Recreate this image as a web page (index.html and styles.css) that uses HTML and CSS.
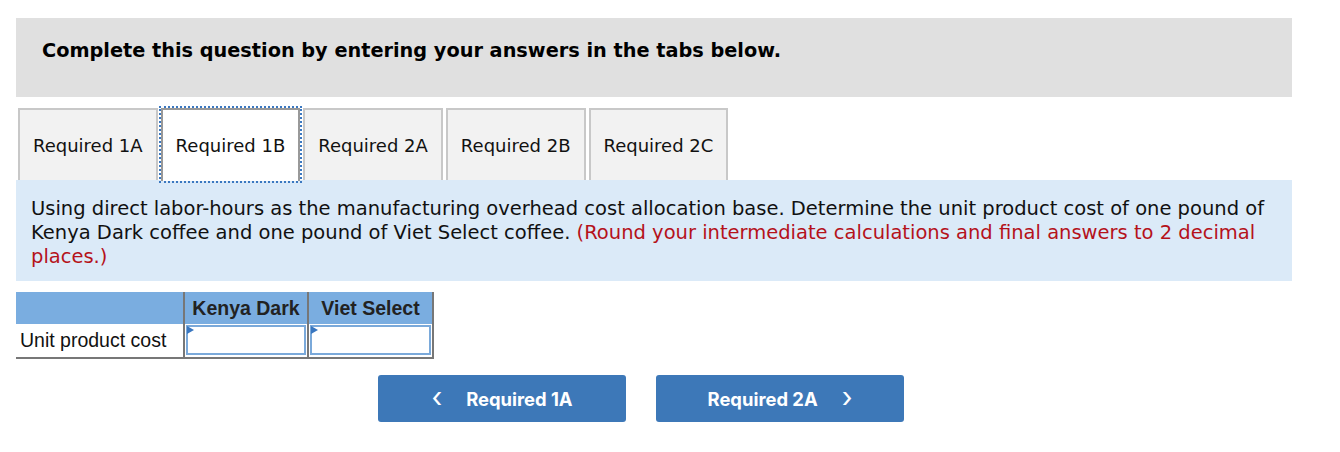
FILE: index.html
```html
<!DOCTYPE html>
<html>
<head>
<meta charset="utf-8">
<link rel="stylesheet" href="styles.css">
</head>
<body>
<div class="wrap">
  <div class="banner">Complete this question by entering your answers in the tabs below.</div>
  <div class="tabs">
    <div class="tab">Required 1A</div>
    <div class="tab active">Required 1B</div>
    <div class="tab">Required 2A</div>
    <div class="tab">Required 2B</div>
    <div class="tab">Required 2C</div>
  </div>
  <div class="panel">
    Using direct labor-hours as the manufacturing overhead cost allocation base. Determine the unit product cost of one pound of Kenya Dark coffee and one pound of Viet Select coffee. <span class="red">(Round your intermediate calculations and final answers to 2 decimal places.)</span>
  </div>
  <table class="grid">
    <tr class="head">
      <th class="c1"></th>
      <th class="c2">Kenya Dark</th>
      <th class="c3">Viet Select</th>
    </tr>
    <tr class="row">
      <td class="label">Unit product cost</td>
      <td class="cell"><div class="input"></div></td>
      <td class="cell"><div class="input"></div></td>
    </tr>
  </table>
  <div class="nav">
    <div class="btn"><span class="chev">&#x2039;</span><span>Required 1A</span></div>
    <div class="btn"><span>Required 2A</span><span class="chev">&#x203A;</span></div>
  </div>
</div>
</body>
</html>
```
FILE: styles.css
```css
html, body { margin: 0; padding: 0; background: #fff; }
body { font-family: "DejaVu Sans", Verdana, sans-serif; color: #000; }
.wrap { padding: 18px 48px 0 16px; }
.banner {
  background: #e0e0e0;
  height: 79px;
  box-sizing: border-box;
  padding: 21px 26px 0;
  font-weight: bold;
  font-size: 19.3px;
  line-height: 24px;
}
.tabs {
  display: flex;
  gap: 3px;
  margin-top: 11px;
  padding-left: 2px;
  height: 72px;
}
.tab {
  background: #f2f2f2;
  border: 2px solid #c8c8c8;
  border-bottom: none;
  box-sizing: border-box;
  height: 72px;
  padding: 25px 13px 0;
  font-size: 18px;
  line-height: 22px;
  color: #111;
}
.tab.active {
  background: #fff;
  border: 2px solid #999;
  border-bottom: none;
  outline: 2px dotted #3b78c0;
  outline-offset: 0;
  position: relative;
  z-index: 2;
  height: 73px;
}
.panel {
  background: #dbeaf8;
  padding: 17px 15px 12px;
  font-size: 19.5px;
  line-height: 24px;
  color: #111;
}
.red { color: #b5121b; }
.grid {
  border-collapse: collapse;
  margin-top: 11px;
  font-family: "Liberation Sans", Arial, sans-serif;
}
.head th {
  background: #7aade0;
  height: 32px;
  padding: 0;
  font-size: 19.5px;
  font-weight: bold;
  color: #222;
  border-left: 2px solid #777;
  border-right: 2px solid #777;
  text-align: center;
}
.head th.c1 { width: 167px; border-left: none; }
.head th.c2 { width: 122px; }
.head th.c3 { width: 123px; }
.row td {
  height: 34px;
  padding: 0;
  border-bottom: 2px solid #777;
  border-left: 2px solid #777;
  border-right: 2px solid #777;
  box-sizing: border-box;
}
.row td.label {
  border-left: none;
  font-size: 19.5px;
  padding-left: 4px;
  color: #111;
}
.row td.cell { padding: 1px; vertical-align: top; }
.input {
  position: relative;
  height: 30px;
  border: 2px solid #7aa9da;
  box-sizing: border-box;
  background: #fff;
}
.input::before {
  content: "";
  position: absolute;
  left: -1px;
  top: -1px;
  border-left: 7px solid #3a77c0;
  border-top: 4px solid transparent;
  border-bottom: 4px solid transparent;
}
.nav {
  display: flex;
  gap: 30px;
  padding-left: 362px;
  margin-top: 16px;
}
.btn {
  width: 248px;
  height: 47px;
  background: #3d78b8;
  border-radius: 3px;
  color: #fff;
  font-family: Inter, Roboto, sans-serif;
  font-weight: 700;
  font-size: 18.4px;
  display: flex;
  align-items: center;
  justify-content: center;
  gap: 24px;
}
.chev { font-size: 28px; font-weight: 400; line-height: 1; margin-top: -4px; }
```
